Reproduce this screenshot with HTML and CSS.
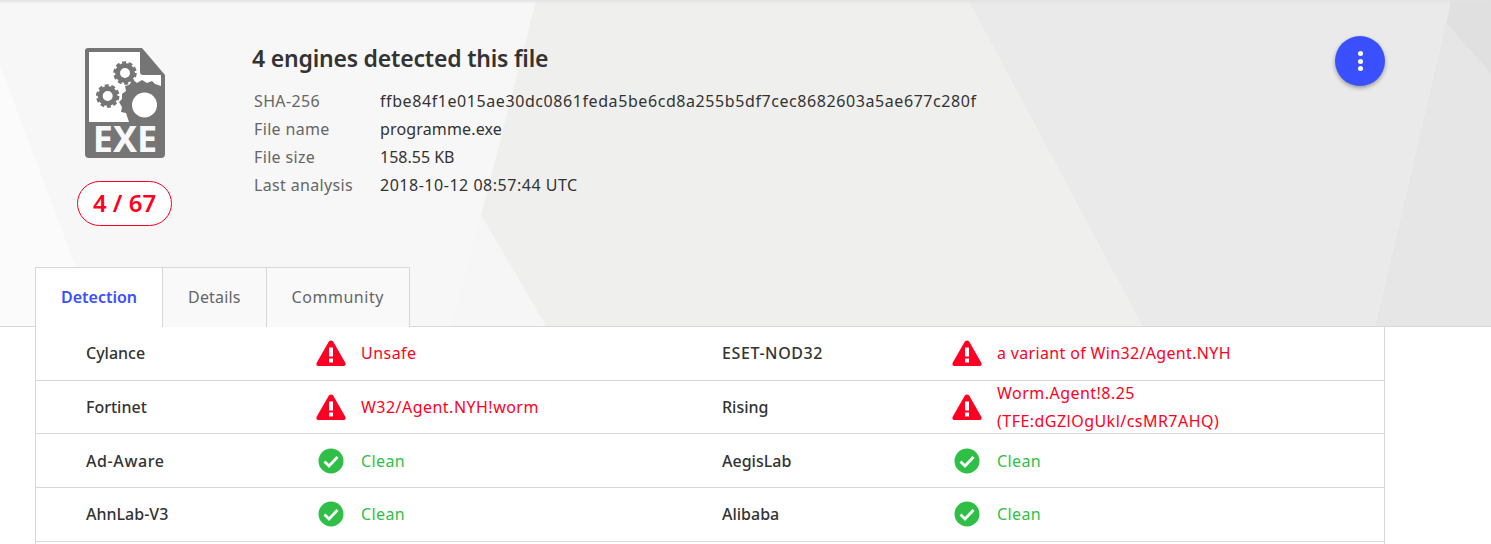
FILE: index.html
```html
<!DOCTYPE html>
<html lang="en">
<head>
<meta charset="utf-8">
<title>4 engines detected this file</title>
<link rel="stylesheet" href="styles.css">
</head>
<body>
<header class="hero">
  <svg class="hero-bg" viewBox="0 0 1491 326" preserveAspectRatio="none" aria-hidden="true">
    <polygon points="0,0 536,0 481,215 546,326 0,326" fill="#f7f7f7"/>
    <polygon points="0,65 98,326 0,326" fill="#fbfbfb"/>
    <polygon points="481,215 451,326 546,326" fill="#f6f6f6"/>
    <polygon points="536,0 968,0 1142,326 546,326 481,215" fill="#efefed"/>
    <polygon points="968,0 1451,0 1375,326 1142,326" fill="#eaeaea"/>
    <polygon points="1451,0 1491,0 1491,326 1375,326" fill="#e6e6e6"/>
    <polygon points="1451,0 1447,24 1491,73 1491,0" fill="#e0e0e0"/>
  </svg>
  <div class="summary">
    <div class="score">
      <svg class="exe" viewBox="0 0 80 120" aria-hidden="true">
        <path fill="#757575" d="M3 0H57L80 27V106Q80 110 76 110H4Q0 110 0 106V3Q0 0 3 0Z"/>
        <path fill="#fff" d="M4 4H55V24Q55 27 58 27H76V38L70 36 67 33 62 35 57 32 52 35 48 32 44 37 40 38 41 43 37 46 37 51 34 54 37 59 36 64 41 65 43 71 44 74H4Z"/>
        <circle cx="59.500" cy="57" r="12.500" fill="#fff"/>
        <circle cx="40" cy="25" r="7.500" fill="none" stroke="#757575" stroke-width="5"/>
        <circle cx="40" cy="25" r="10.500" fill="none" stroke="#757575" stroke-width="2.500" stroke-dasharray="4 2.600"/>
        <circle cx="22.700" cy="48" r="7.500" fill="none" stroke="#757575" stroke-width="5"/>
        <circle cx="22.700" cy="48" r="10.500" fill="none" stroke="#757575" stroke-width="2.500" stroke-dasharray="4 2.600"/>
        <text x="40" y="104" class="exe-label" text-anchor="middle">EXE</text>
      </svg>
      <div class="badge">4 / 67</div>
    </div>
    <div class="info">
      <h1>4 engines detected this file</h1>
      <dl class="meta">
        <dt>SHA-256</dt><dd class="hash">ffbe84f1e015ae30dc0861feda5be6cd8a255b5df7cec8682603a5ae677c280f</dd>
        <dt>File name</dt><dd class="name">programme.exe</dd>
        <dt>File size</dt><dd>158.55 KB</dd>
        <dt>Last analysis</dt><dd class="date">2018-10-12 08:57:44 UTC</dd>
      </dl>
    </div>
    <button class="fab" type="button" aria-label="More"><span></span><span></span><span></span></button>
  </div>
  <nav class="tabs">
    <a class="tab active">Detection</a>
    <a class="tab details">Details</a>
    <a class="tab community">Community</a>
  </nav>
</header>
<main class="panel">
  <div class="row">
    <div class="cell"><span class="engine">Cylance</span><svg class="ic" viewBox="0 0 30 26"><use href="#warn"/></svg><span class="bad">Unsafe</span></div>
    <div class="cell"><span class="engine wide">ESET-NOD32</span><svg class="ic" viewBox="0 0 30 26"><use href="#warn"/></svg><span class="bad tight">a variant of Win32/Agent.NYH</span></div>
  </div>
  <div class="row">
    <div class="cell"><span class="engine">Fortinet</span><svg class="ic" viewBox="0 0 30 26"><use href="#warn"/></svg><span class="bad">W32/Agent.NYH!worm</span></div>
    <div class="cell"><span class="engine">Rising</span><svg class="ic" viewBox="0 0 30 26"><use href="#warn"/></svg><span class="bad">Worm.Agent!8.25 (TFE:dGZlOgUkl/csMR7AHQ)</span></div>
  </div>
  <div class="row">
    <div class="cell"><span class="engine wide">Ad-Aware</span><svg class="ic" viewBox="0 0 30 26"><use href="#ok"/></svg><span class="good">Clean</span></div>
    <div class="cell"><span class="engine">AegisLab</span><svg class="ic" viewBox="0 0 30 26"><use href="#ok"/></svg><span class="good">Clean</span></div>
  </div>
  <div class="row">
    <div class="cell"><span class="engine">AhnLab-V3</span><svg class="ic" viewBox="0 0 30 26"><use href="#ok"/></svg><span class="good">Clean</span></div>
    <div class="cell"><span class="engine">Alibaba</span><svg class="ic" viewBox="0 0 30 26"><use href="#ok"/></svg><span class="good">Clean</span></div>
  </div>
</main>
<svg class="defs" aria-hidden="true">
  <symbol id="warn" viewBox="0 0 30 26">
    <path fill="#ff0022" fill-rule="evenodd" d="M13 1.200Q15 -.4 17 1.200L29.300 22.800Q30.400 25.500 27.800 26H2.200Q-.4 25.500 .7 22.800ZM13 7.500V16.500H17V7.500ZM13 18.500V22.500H17V18.500Z"/>
  </symbol>
  <symbol id="ok" viewBox="0 0 30 26">
    <circle cx="15" cy="13" r="12.500" fill="#2fbf47"/>
    <path d="M8.500 13.500L13 18 21.500 9" fill="none" stroke="#fff" stroke-width="2.800"/>
  </symbol>
</svg>
</body>
</html>
```
FILE: styles.css
```css
* { box-sizing: border-box; }
html, body { margin: 0; padding: 0; }
body {
  width: 1491px;
  height: 544px;
  overflow: hidden;
  background: #fff;
  font-family: "Noto Sans", "Open Sans", sans-serif;
  font-size: 16px;
  color: #313131;
}
.hero {
  position: relative;
  height: 327px;
  padding: 0 106px 0 35px;
  display: flex;
  flex-direction: column;
  border-bottom: 1px solid #d8d8d8;
}
.hero::after {
  content: "";
  position: absolute;
  left: 0;
  right: 0;
  top: 0;
  height: 4px;
  background: linear-gradient(#e2e2e2, rgba(226, 226, 226, 0));
}
.hero-bg { position: absolute; left: 0; top: 0; width: 100%; height: 326px; }
.summary { position: relative; display: flex; height: 267px; }
.score { width: 180px; padding: 48px 0 0 42px; display: flex; flex-direction: column; align-items: flex-start; }
.exe { width: 80px; height: 120px; margin-left: 8px; display: block; flex: none; }
.exe-label { font-family: "Noto Sans", sans-serif; font-weight: 700; font-size: 36px; fill: #f8f8f8; }
.badge {
  width: 95px;
  height: 45px;
  margin: 13px 0 0 0;
  border: 1px solid #ff0022;
  border-radius: 23px;
  background: #fff;
  color: #ff0022;
  font-size: 24px;
  font-weight: 600;
  line-height: 41px;
  text-align: center;
}
.info { flex: 1; padding: 42px 0 0 37px; }
h1 { margin: 0 0 12px; font-size: 23px; line-height: 33px; font-weight: 600; letter-spacing: -.2px; color: #333; }
.meta { margin: 0; display: grid; grid-template-columns: 128px 1fr; grid-auto-rows: 28px; line-height: 28px; }
.meta dt { color: #666; padding-left: 2px; letter-spacing: .35px; }
.meta dd { margin: 0; color: #333; }
.meta .hash { letter-spacing: .58px; }
.meta .name { letter-spacing: .15px; }
.meta .date { letter-spacing: .52px; }
.fab {
  width: 50px; height: 50px; margin-top: 36px; border: 0; border-radius: 50%;
  background: #3a50ff; box-shadow: 0 2px 4px rgba(0,0,0,.35);
  display: flex; flex-direction: column; align-items: center; justify-content: center; gap: 2.5px; padding: 0;
}
.fab span { width: 5px; height: 5px; border-radius: 50%; background: #fff; }
.tabs { position: relative; display: flex; height: 60px; align-self: flex-start; border: 1px solid #d8d8d8; border-bottom: 0; margin-bottom: -1px; background: #f9f9f9; }
.tab { display: flex; align-items: center; padding: 0 25px 2px; border-left: 1px solid #d8d8d8; color: #666; height: 59px; }
.tab:first-child { border-left: 0; }
.tab.details { letter-spacing: .15px; }
.tab.community { letter-spacing: .55px; }
.tab.active { background: #fff; color: #3a50ff; font-weight: 600; height: 60px; }
.panel { width: 1350px; height: 220px; margin-left: 35px; padding-top: .2px; border-left: 1px solid #d8d8d8; border-right: 1px solid #d8d8d8; }
.row { display: grid; grid-template-columns: 636px 1fr; grid-template-rows: minmax(0, 1fr); height: 53.6px; border-bottom: 1px solid #d8d8d8; }
.cell { display: flex; align-items: center; padding-left: 50px; line-height: 28px; min-height: 0; }
.engine { width: 230px; flex: none; font-weight: 500; color: #333; }
.engine.wide { letter-spacing: .6px; }
.ic { width: 30px; height: 26px; flex: none; margin-right: 15px; }
.bad { color: #ff0022; max-width: 260px; letter-spacing: .47px; }
.bad.tight { letter-spacing: .34px; }
.good { color: #2fbf47; letter-spacing: .4px; }
.defs { position: absolute; width: 0; height: 0; }
```
